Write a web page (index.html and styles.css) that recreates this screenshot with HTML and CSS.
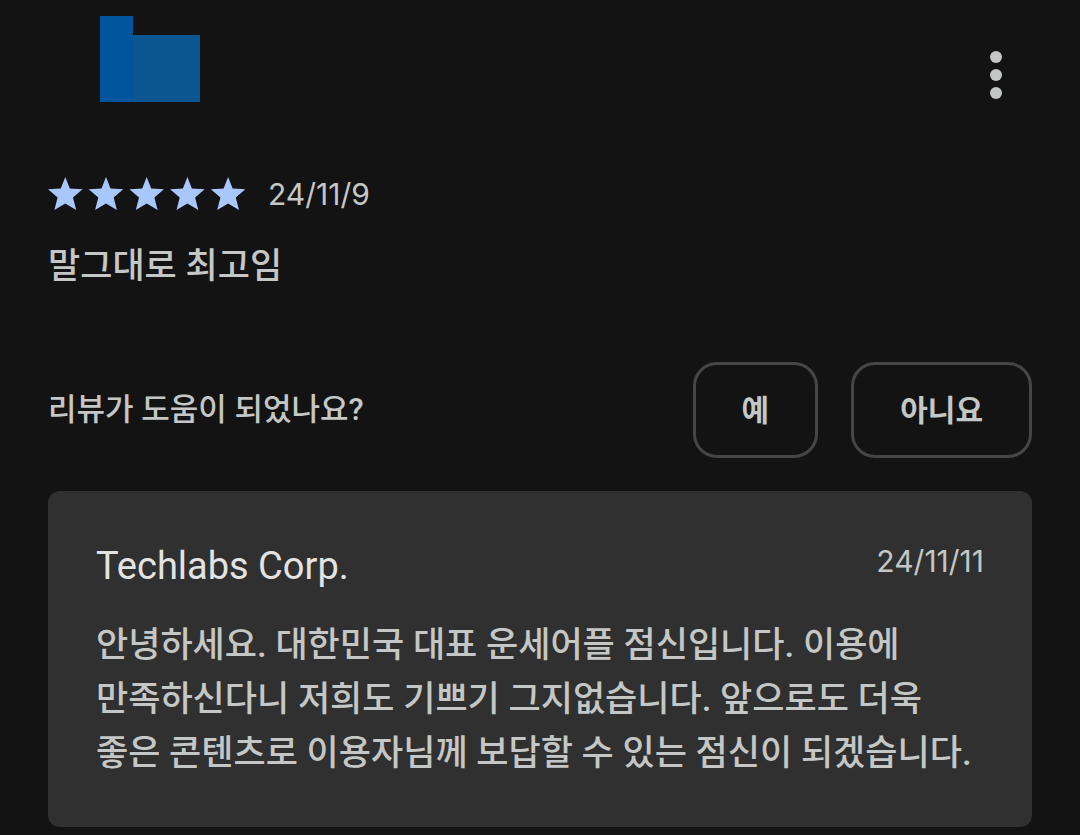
FILE: index.html
```html
<!DOCTYPE html>
<html lang="ko">
  <head>
    <meta charset="UTF-8" />
    <meta name="viewport" content="width=device-width, initial-scale=1.0" />
    <title>리뷰</title>
    <link rel="stylesheet" href="styles.css">
  </head>
  <body>
    <main class="review">
      <header class="review-header">
        <svg class="avatar" width="100" height="86" viewBox="0 0 100 86" aria-hidden="true">
          <rect x="0" y="0" width="33" height="86" fill="#00549b" />
          <rect x="33" y="19" width="67" height="67" fill="#0b5690" />
        </svg>
        <button class="menu-btn" aria-label="더보기">
          <svg width="12" height="48" viewBox="0 0 12 48" fill="currentColor">
            <circle cx="6" cy="6" r="6" />
            <circle cx="6" cy="24" r="6" />
            <circle cx="6" cy="42" r="6" />
          </svg>
        </button>
      </header>

      <div class="rating">
        <svg class="stars" width="198" height="34" viewBox="0 0 198 34" role="img" aria-label="별점 5개">
          <defs>
            <path id="star" d="M17.3 0 L21.8 11.4 L34.5 12.2 L25 20.4 L28.2 33 L17.3 26.6 L6.400 33 L9.600 20.4 L0 12.2 L12.8 11.4 Z" />
          </defs>
          <use href="#star" x="0" />
          <use href="#star" x="40.700" />
          <use href="#star" x="81.400" />
          <use href="#star" x="122.100" />
          <use href="#star" x="162.800" />
        </svg>
        <time class="date" datetime="2024-11-09">24/11/9</time>
      </div>

      <p class="review-text">말그대로 최고임</p>

      <div class="helpful">
        <span class="question">리뷰가 도움이 되었나요?</span>
        <div class="answers">
          <button class="answer-btn">예</button>
          <button class="answer-btn">아니요</button>
        </div>
      </div>

      <section class="reply">
        <div class="reply-header">
          <h2 class="company">Techlabs Corp.</h2>
          <time class="date" datetime="2024-11-11">24/11/11</time>
        </div>
        <p class="reply-text">안녕하세요. 대한민국 대표 운세어플 점신입니다. 이용에 만족하신다니 저희도 기쁘기 그지없습니다. 앞으로도 더욱 좋은 콘텐츠로 이용자님께 보답할 수 있는 점신이 되겠습니다.</p>
      </section>
    </main>
  </body>
</html>
```
FILE: styles.css
```css
* {
  box-sizing: border-box;
}
body {
  margin: 0;
  background-color: #131313;
  color: #c4c7c5;
  font-family: Roboto, "Noto Sans CJK KR", sans-serif;
  font-weight: 500;
  word-break: keep-all;
}
.review {
  padding: 16px 48px 8px;
}
.review-header {
  display: flex;
  justify-content: space-between;
  padding: 0 24px 0 52px;
}
.avatar {
  display: block;
}
.menu-btn {
  display: flex;
  align-items: center;
  height: 48px;
  margin-top: 35px;
  padding: 0 6px;
  border: none;
  background: none;
  color: #c4c7c5;
  cursor: pointer;
}
.rating {
  display: flex;
  align-items: center;
  gap: 22px;
  height: 40px;
  margin-top: 72px;
}
.stars {
  fill: #a8c7fa;
}
.date {
  font-family: Inter, sans-serif;
  font-size: 30px;
  font-weight: 400;
  line-height: 44px;
}
.review-text {
  margin: 26px 0 0;
  font-size: 35px;
  line-height: 54px;
}
.helpful {
  display: flex;
  align-items: center;
  justify-content: space-between;
  margin-top: 68px;
}
.question {
  font-size: 31px;
  line-height: 40px;
}
.answers {
  display: flex;
  gap: 33px;
}
.answer-btn {
  height: 96px;
  padding: 0 46px 4px;
  border: 3px solid #444746;
  border-radius: 24px;
  background: none;
  color: #c4c7c5;
  font-family: inherit;
  font-size: 30px;
  font-weight: 700;
  cursor: pointer;
}
.reply {
  margin-top: 33px;
  padding: 48px 48px 46px;
  border-radius: 12px;
  background-color: #303030;
}
.reply-header {
  display: flex;
  align-items: flex-start;
  justify-content: space-between;
}
.company {
  margin: 0;
  color: #e3e3e3;
  font-size: 38px;
  font-weight: 400;
  line-height: 54px;
}
.reply-text {
  margin: 26px 0 0;
  font-size: 35px;
  line-height: 54px;
}
```
